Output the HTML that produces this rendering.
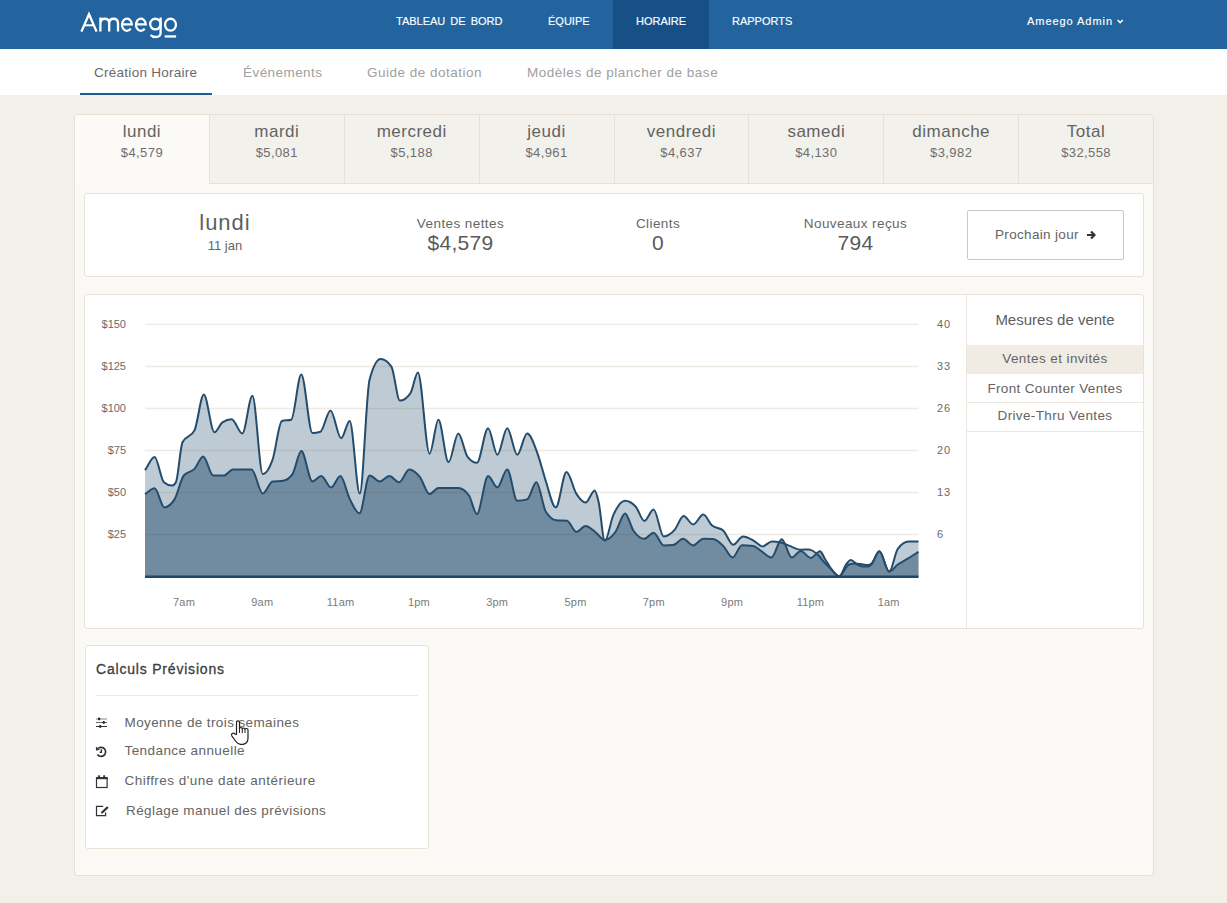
<!DOCTYPE html>
<html><head><meta charset="utf-8">
<style>
*{margin:0;padding:0;box-sizing:border-box}
html,body{width:1227px;height:903px;overflow:hidden;background:#f3f0e9;font-family:"Liberation Sans", sans-serif}
.a{position:absolute}
.t{position:absolute;white-space:nowrap;line-height:1}
</style></head><body>
<div class="a" style="left:0;top:0;width:1227px;height:49px;background:#23639e"></div><div class="a" style="left:613px;top:0;width:96px;height:49px;background:#175087"></div><svg class="a" style="left:0;top:0" width="200" height="49" viewBox="0 0 200 49"><g fill="none" stroke="#fff" stroke-width="2.3"><path d="M81.4,31.6 L89,14.2 L96.6,31.6" stroke-linejoin="miter" stroke-miterlimit="10"/><path d="M84.6,25.3 H93.4" stroke-width="2"/><path d="M100.4,31.6 V17.6 M100.4,23.5 C100.4,20.3 102.2,18.75 104.8,18.75 C107.4,18.75 109.2,20.3 109.2,23.5 V31.6 M109.2,23.5 C109.2,20.3 111,18.75 113.6,18.75 C116.2,18.75 118,20.3 118,23.5 V31.6"/><path d="M122,24.3 H131.8 A4.9,6.05 0 1 0 130.7,28.6"/><path d="M135.95,24.3 H145.75 A4.9,6.05 0 1 0 144.65,28.6"/><ellipse cx="155.35" cy="24.1" rx="5.2" ry="5.35"/><path d="M160.6,17.6 V33 C160.6,35.9 158.6,37.0 155.6,37.0 C153.2,37.0 151.6,36.2 150.6,34.8"/><ellipse cx="170.5" cy="24.7" rx="5.45" ry="5.95"/></g><rect x="164.7" y="35.3" width="11.4" height="2.3" fill="#fff"/></svg><div class="t" style="left:396.00px;top:15.69px;font-size:11px;color:#fff;letter-spacing:0px;word-spacing:2px;-webkit-text-stroke:0.15px #fff;">TABLEAU DE BORD</div><div class="t" style="left:548.00px;top:15.69px;font-size:11px;color:#fff;letter-spacing:0px;word-spacing:2px;-webkit-text-stroke:0.15px #fff;">ÉQUIPE</div><div class="t" style="left:636.00px;top:15.69px;font-size:11px;color:#fff;letter-spacing:0px;word-spacing:2px;-webkit-text-stroke:0.15px #fff;">HORAIRE</div><div class="t" style="left:732.00px;top:15.69px;font-size:11px;color:#fff;letter-spacing:0px;word-spacing:2px;-webkit-text-stroke:0.15px #fff;">RAPPORTS</div><div class="t" style="left:1027.00px;top:15.69px;font-size:11px;color:#fff;letter-spacing:0.95px;-webkit-text-stroke:0.15px #fff;">Ameego Admin</div><svg class="a" style="left:1116px;top:18px" width="9" height="7" viewBox="0 0 9 7"><path d="M1.6,2 L4.2,4.6 L6.8,2" fill="none" stroke="#fff" stroke-width="1.5"/></svg>
<div class="a" style="left:0;top:49px;width:1227px;height:46px;background:#fff"></div><div class="a" style="left:80px;top:93px;width:132px;height:2px;background:#1d5a96"></div><div class="t" style="left:94.00px;top:65.57px;font-size:13.5px;color:#6a6a6a;letter-spacing:0.27px;">Création Horaire</div><div class="t" style="left:243.00px;top:65.57px;font-size:13.5px;color:#a0a0a0;letter-spacing:0.44px;">Événements</div><div class="t" style="left:367.00px;top:65.57px;font-size:13.5px;color:#a0a0a0;letter-spacing:0.5px;">Guide de dotation</div><div class="t" style="left:527.00px;top:65.57px;font-size:13.5px;color:#a0a0a0;letter-spacing:0.52px;">Modèles de plancher de base</div>
<!-- main panel -->
<div class="a" style="left:74px;top:114px;width:1080px;height:762px;background:#faf9f6;border:1px solid #e6e0d5;border-radius:4px"></div>
<div class="a" style="left:75px;top:115px;width:134px;height:69px;background:#fbfaf7;border-top-left-radius:3px"></div><div class="t" style="left:41.94px;top:122.61px;font-size:17px;color:#636363;letter-spacing:0.5px;width:200px;text-align:center;">lundi</div><div class="t" style="left:41.94px;top:146.00px;font-size:13px;color:#6e6e6e;letter-spacing:0.4px;width:200px;text-align:center;">$4,579</div><div class="a" style="left:209px;top:115px;width:135px;height:69px;background:#f3f1eb;border-left:1px solid #e6e0d5;border-bottom:1px solid #e6e0d5;"></div><div class="t" style="left:176.81px;top:122.61px;font-size:17px;color:#636363;letter-spacing:0.5px;width:200px;text-align:center;">mardi</div><div class="t" style="left:176.81px;top:146.00px;font-size:13px;color:#6e6e6e;letter-spacing:0.4px;width:200px;text-align:center;">$5,081</div><div class="a" style="left:344px;top:115px;width:135px;height:69px;background:#f3f1eb;border-left:1px solid #e6e0d5;border-bottom:1px solid #e6e0d5;"></div><div class="t" style="left:311.69px;top:122.61px;font-size:17px;color:#636363;letter-spacing:0.5px;width:200px;text-align:center;">mercredi</div><div class="t" style="left:311.69px;top:146.00px;font-size:13px;color:#6e6e6e;letter-spacing:0.4px;width:200px;text-align:center;">$5,188</div><div class="a" style="left:479px;top:115px;width:135px;height:69px;background:#f3f1eb;border-left:1px solid #e6e0d5;border-bottom:1px solid #e6e0d5;"></div><div class="t" style="left:446.56px;top:122.61px;font-size:17px;color:#636363;letter-spacing:0.5px;width:200px;text-align:center;">jeudi</div><div class="t" style="left:446.56px;top:146.00px;font-size:13px;color:#6e6e6e;letter-spacing:0.4px;width:200px;text-align:center;">$4,961</div><div class="a" style="left:614px;top:115px;width:134px;height:69px;background:#f3f1eb;border-left:1px solid #e6e0d5;border-bottom:1px solid #e6e0d5;"></div><div class="t" style="left:581.44px;top:122.61px;font-size:17px;color:#636363;letter-spacing:0.5px;width:200px;text-align:center;">vendredi</div><div class="t" style="left:581.44px;top:146.00px;font-size:13px;color:#6e6e6e;letter-spacing:0.4px;width:200px;text-align:center;">$4,637</div><div class="a" style="left:748px;top:115px;width:135px;height:69px;background:#f3f1eb;border-left:1px solid #e6e0d5;border-bottom:1px solid #e6e0d5;"></div><div class="t" style="left:716.31px;top:122.61px;font-size:17px;color:#636363;letter-spacing:0.5px;width:200px;text-align:center;">samedi</div><div class="t" style="left:716.31px;top:146.00px;font-size:13px;color:#6e6e6e;letter-spacing:0.4px;width:200px;text-align:center;">$4,130</div><div class="a" style="left:883px;top:115px;width:135px;height:69px;background:#f3f1eb;border-left:1px solid #e6e0d5;border-bottom:1px solid #e6e0d5;"></div><div class="t" style="left:851.19px;top:122.61px;font-size:17px;color:#636363;letter-spacing:0.5px;width:200px;text-align:center;">dimanche</div><div class="t" style="left:851.19px;top:146.00px;font-size:13px;color:#6e6e6e;letter-spacing:0.4px;width:200px;text-align:center;">$3,982</div><div class="a" style="left:1018px;top:115px;width:135px;height:69px;background:#f3f1eb;border-left:1px solid #e6e0d5;border-bottom:1px solid #e6e0d5;border-top-right-radius:3px;"></div><div class="t" style="left:986.06px;top:122.61px;font-size:17px;color:#636363;letter-spacing:0.5px;width:200px;text-align:center;">Total</div><div class="t" style="left:986.06px;top:146.00px;font-size:13px;color:#6e6e6e;letter-spacing:0.4px;width:200px;text-align:center;">$32,558</div>
<!-- summary card -->
<div class="a" style="left:84px;top:193px;width:1060px;height:84px;background:#fff;border:1px solid #e8e2d7;border-radius:3px"></div>
<div class="t" style="left:125.00px;top:211.58px;font-size:22px;color:#606060;letter-spacing:1px;width:200px;text-align:center;">lundi</div><div class="t" style="left:125.00px;top:239.20px;font-size:13px;color:#666;width:200px;text-align:center;">11 jan</div><div class="t" style="left:360.50px;top:216.57px;font-size:13.5px;color:#666;letter-spacing:0.42px;width:200px;text-align:center;">Ventes nettes</div><div class="t" style="left:360.50px;top:232.22px;font-size:21px;color:#5a5a5a;letter-spacing:0.3px;width:200px;text-align:center;">$4,579</div><div class="t" style="left:558.00px;top:216.57px;font-size:13.5px;color:#666;letter-spacing:0.42px;width:200px;text-align:center;">Clients</div><div class="t" style="left:558.00px;top:232.22px;font-size:21px;color:#5a5a5a;letter-spacing:0.3px;width:200px;text-align:center;">0</div><div class="t" style="left:755.50px;top:216.57px;font-size:13.5px;color:#666;letter-spacing:0.42px;width:200px;text-align:center;">Nouveaux reçus</div><div class="t" style="left:755.50px;top:232.22px;font-size:21px;color:#5a5a5a;letter-spacing:0.3px;width:200px;text-align:center;">794</div><div class="a" style="left:967px;top:210px;width:157px;height:50px;border:1px solid #c8c8c8;border-radius:2px;background:#fff"></div><div class="t" style="left:995.00px;top:227.57px;font-size:13.5px;color:#646464;letter-spacing:0.33px;">Prochain jour</div><svg class="a" style="left:1086px;top:230px" width="11" height="10" viewBox="0 0 11 10"><path d="M1,5 H8 M5,1.5 L8.5,5 L5,8.5" fill="none" stroke="#333" stroke-width="2.2"/></svg>
<!-- chart card -->
<div class="a" style="left:84px;top:294px;width:1060px;height:335px;background:#fff;border:1px solid #e8e2d7;border-radius:3px"></div>
<div class="a" style="left:966px;top:295px;width:1px;height:333px;background:#ece7de"></div>
<svg class="a" style="left:0;top:0" width="1227" height="903"><line x1="145" x2="918.5" y1="534.57" y2="534.57" stroke="#efeae1" stroke-width="1.4"/><line x1="145" x2="918.5" y1="492.54" y2="492.54" stroke="#efeae1" stroke-width="1.4"/><line x1="145" x2="918.5" y1="450.51" y2="450.51" stroke="#efeae1" stroke-width="1.4"/><line x1="145" x2="918.5" y1="408.48" y2="408.48" stroke="#efeae1" stroke-width="1.4"/><line x1="145" x2="918.5" y1="366.45" y2="366.45" stroke="#efeae1" stroke-width="1.4"/><line x1="145" x2="918.5" y1="324.42" y2="324.42" stroke="#efeae1" stroke-width="1.4"/><path d="M145.0,470.2C148.2,465.8 151.4,456.9 154.6,456.9C157.7,456.9 160.8,479.6 163.9,482.2C166.6,484.5 169.2,485.6 171.9,485.6C173.2,485.6 174.6,484.5 175.9,482.2C178.1,478.5 180.3,446.7 182.5,442.3C186.5,434.4 190.5,438.3 194.5,430.4C197.6,424.3 200.7,394.5 203.8,394.5C207.3,394.5 210.9,432.2 214.4,432.2C217.1,432.2 219.7,424.2 222.4,422.4C225.5,420.3 228.6,419.2 231.7,419.2C235.2,419.2 238.8,433.5 242.3,433.5C245.7,433.5 249.0,395.8 252.4,395.8C255.9,395.8 259.3,474.2 262.8,474.2C266.1,474.2 269.3,468.9 272.6,459.6C275.7,450.7 278.8,421.9 281.9,421.0C285.0,420.1 288.1,420.6 291.2,419.7C294.6,418.8 297.9,374.5 301.3,374.5C305.0,374.5 308.7,433.0 312.4,433.0C315.1,433.0 317.7,432.6 320.4,431.7C323.8,430.6 327.1,410.4 330.5,410.4C334.0,410.4 337.6,438.3 341.1,438.3C344.0,438.3 346.8,421.0 349.7,421.0C353.1,421.0 356.4,493.6 359.8,493.6C363.0,493.6 366.3,392.1 369.5,380.0C373.2,366.1 377.0,359.1 380.7,359.1C384.3,359.1 387.8,361.6 391.4,366.6C394.2,370.6 397.1,400.6 399.9,400.6C403.4,400.6 407.0,398.1 410.5,393.1C413.0,389.6 415.4,372.4 417.9,372.4C421.8,372.4 425.7,453.7 429.6,453.7C432.5,453.7 435.5,419.7 438.4,419.7C441.8,419.7 445.1,462.2 448.5,462.2C451.8,462.2 455.0,433.5 458.3,433.5C461.4,433.5 464.5,453.0 467.6,456.9C470.7,460.8 473.8,462.8 476.9,462.8C480.6,462.8 484.4,428.2 488.1,428.2C491.2,428.2 494.3,454.8 497.4,454.8C500.7,454.8 503.9,428.2 507.2,428.2C510.6,428.2 513.9,454.8 517.3,454.8C520.6,454.8 523.8,433.5 527.1,433.5C530.7,433.5 534.2,444.5 537.8,454.3C540.4,461.6 543.1,472.8 545.7,480.8C549.1,491.0 552.4,507.4 555.8,507.4C559.4,507.4 562.9,472.1 566.5,472.1C569.8,472.1 573.0,488.5 576.3,493.6C579.4,498.5 582.5,502.6 585.6,502.6C588.6,502.6 591.7,490.4 594.7,490.4C596.0,490.4 597.3,496.5 598.6,502.0C600.7,510.8 602.7,540.8 604.8,540.8C607.6,540.8 610.5,521.6 613.3,515.2C617.2,506.4 621.1,500.8 625.0,500.8C628.6,500.8 632.2,502.8 635.8,506.7C638.6,509.8 641.5,520.9 644.3,520.9C647.4,520.9 650.5,509.5 653.6,509.5C657.0,509.5 660.3,536.4 663.7,536.4C667.3,536.4 671.0,534.0 674.6,529.9C677.6,526.6 680.6,516.0 683.6,516.0C686.8,516.0 690.0,524.5 693.2,524.5C696.6,524.5 699.9,514.5 703.3,514.5C706.2,514.5 709.2,523.1 712.1,525.6C715.8,528.8 719.5,527.2 723.2,530.4C726.5,533.3 729.9,544.8 733.2,544.8C736.4,544.8 739.7,536.5 742.9,536.5C746.3,536.5 749.7,538.5 753.1,540.3C756.2,541.9 759.4,546.4 762.5,546.4C765.6,546.4 768.8,541.4 771.9,541.4C774.9,541.4 777.8,541.8 780.8,542.5C783.7,543.2 786.7,544.8 789.6,545.9C793.3,547.3 797.0,549.7 800.7,549.7C803.4,549.7 806.1,549.4 808.8,549.4C810.2,549.4 811.6,550.2 813.0,551.0C814.7,552.0 816.3,553.4 818.0,555.0C820.0,556.9 822.0,559.8 824.0,562.0C826.0,564.2 828.0,566.1 830.0,568.0C833.2,571.0 836.4,576.3 839.6,576.3C841.7,576.3 843.9,567.3 846.0,564.5C847.6,562.3 849.3,559.9 850.9,559.9C852.8,559.9 854.8,563.0 856.7,564.1C858.7,565.2 860.6,566.5 862.6,566.5C864.6,566.5 866.5,566.5 868.5,566.5C869.5,566.5 870.4,565.4 871.4,564.5C874.1,562.0 876.7,551.3 879.4,551.3C882.7,551.3 885.9,571.6 889.2,571.6C892.1,571.6 894.9,552.8 897.8,548.9C901.4,544.0 905.0,541.6 908.6,541.6C911.9,541.6 915.2,541.6 918.5,541.6L918.5,577L145,577Z" fill="#244c6c" fill-opacity="0.29"/><path d="M145.0,494.1C148.2,492.2 151.4,488.3 154.6,488.3C157.9,488.3 161.1,507.4 164.4,507.4C167.8,507.4 171.1,504.7 174.5,499.4C177.6,494.5 180.7,479.3 183.8,475.5C187.4,471.1 190.9,472.7 194.5,468.9C197.4,465.8 200.3,456.4 203.2,456.4C206.5,456.4 209.8,475.5 213.1,475.5C216.6,475.5 220.2,475.5 223.7,475.5C226.8,475.5 229.9,469.4 233.0,469.4C236.5,469.4 240.1,469.4 243.6,469.4C246.3,469.4 248.9,469.4 251.6,469.4C255.3,469.4 259.1,493.6 262.8,493.6C266.1,493.6 269.3,482.1 272.6,481.6C276.1,481.1 279.7,481.3 283.2,480.8C286.3,480.3 289.4,478.6 292.5,474.2C295.4,470.0 298.4,451.1 301.3,451.1C305.0,451.1 308.7,481.4 312.4,481.4C315.3,481.4 318.3,476.1 321.2,476.1C324.5,476.1 327.8,487.5 331.1,487.5C334.2,487.5 337.3,476.1 340.4,476.1C343.5,476.1 346.6,492.8 349.7,498.9C353.0,505.3 356.2,513.3 359.5,513.3C362.9,513.3 366.2,475.5 369.6,475.5C373.0,475.5 376.5,481.6 379.9,481.6C383.0,481.6 386.1,476.1 389.2,476.1C392.6,476.1 395.9,482.2 399.3,482.2C402.6,482.2 405.9,469.4 409.2,469.4C412.7,469.4 416.3,472.5 419.8,476.9C423.1,481.0 426.3,494.1 429.6,494.1C432.5,494.1 435.5,488.0 438.4,488.0C445.0,488.0 451.7,488.0 458.3,488.0C461.9,488.0 465.4,490.5 469.0,495.5C471.6,499.2 474.3,514.1 476.9,514.1C480.6,514.1 484.4,476.1 488.1,476.1C491.2,476.1 494.3,487.5 497.4,487.5C500.7,487.5 503.9,469.4 507.2,469.4C510.6,469.4 513.9,500.8 517.3,500.8C520.6,500.8 523.8,500.3 527.1,499.4C530.2,498.5 533.3,482.2 536.4,482.2C539.5,482.2 542.6,506.3 545.7,511.4C549.3,517.3 552.8,519.9 556.4,520.2C559.9,520.5 563.5,520.4 567.0,520.7C570.1,521.0 573.2,531.9 576.3,531.9C579.4,531.9 582.5,526.0 585.6,526.0C588.9,526.0 592.2,529.8 595.5,532.2C598.6,534.5 601.7,540.0 604.8,540.0C608.4,540.0 612.1,536.6 615.7,531.5C618.8,527.2 621.9,513.6 625.0,513.6C627.8,513.6 630.7,526.6 633.5,530.7C637.1,535.9 640.7,538.8 644.3,538.8C647.4,538.8 650.5,532.7 653.6,532.7C657.0,532.7 660.3,545.4 663.7,545.4C666.8,545.4 669.9,545.3 673.0,545.1C676.4,544.9 679.7,538.8 683.1,538.8C686.5,538.8 689.8,545.4 693.2,545.4C696.6,545.4 699.9,538.7 703.3,538.7C706.6,538.7 709.9,538.8 713.2,538.9C716.5,539.0 719.9,542.6 723.2,545.9C726.3,549.0 729.5,557.5 732.6,557.5C735.7,557.5 738.9,545.3 742.0,545.3C745.7,545.3 749.4,545.5 753.1,545.9C756.1,546.2 759.0,549.8 762.0,551.7C765.1,553.7 768.3,557.5 771.4,557.5C774.8,557.5 778.3,539.2 781.7,539.2C785.1,539.2 788.4,557.5 791.8,557.5C794.8,557.5 797.7,550.9 800.7,550.9C804.1,550.9 807.4,557.9 810.8,557.9C813.9,557.9 816.9,551.3 820.0,551.3C821.7,551.3 823.3,556.4 825.0,559.0C826.7,561.6 828.3,564.7 830.0,567.0C833.0,571.2 836.1,576.3 839.1,576.3C842.4,576.3 845.6,565.5 848.9,564.5C850.9,563.9 852.8,563.6 854.8,563.6C856.7,563.6 858.7,563.9 860.6,564.1C863.2,564.4 865.9,565.0 868.5,565.0C869.5,565.0 870.4,564.3 871.4,563.6C874.1,561.6 876.7,551.3 879.4,551.3C882.7,551.3 885.9,571.6 889.2,571.6C892.1,571.6 894.9,566.6 897.8,564.5C901.1,562.2 904.3,560.7 907.6,558.7C911.2,556.5 914.9,554.1 918.5,551.8L918.5,577L145,577Z" fill="#244c6c" fill-opacity="0.5"/><path d="M145.0,470.2C148.2,465.8 151.4,456.9 154.6,456.9C157.7,456.9 160.8,479.6 163.9,482.2C166.6,484.5 169.2,485.6 171.9,485.6C173.2,485.6 174.6,484.5 175.9,482.2C178.1,478.5 180.3,446.7 182.5,442.3C186.5,434.4 190.5,438.3 194.5,430.4C197.6,424.3 200.7,394.5 203.8,394.5C207.3,394.5 210.9,432.2 214.4,432.2C217.1,432.2 219.7,424.2 222.4,422.4C225.5,420.3 228.6,419.2 231.7,419.2C235.2,419.2 238.8,433.5 242.3,433.5C245.7,433.5 249.0,395.8 252.4,395.8C255.9,395.8 259.3,474.2 262.8,474.2C266.1,474.2 269.3,468.9 272.6,459.6C275.7,450.7 278.8,421.9 281.9,421.0C285.0,420.1 288.1,420.6 291.2,419.7C294.6,418.8 297.9,374.5 301.3,374.5C305.0,374.5 308.7,433.0 312.4,433.0C315.1,433.0 317.7,432.6 320.4,431.7C323.8,430.6 327.1,410.4 330.5,410.4C334.0,410.4 337.6,438.3 341.1,438.3C344.0,438.3 346.8,421.0 349.7,421.0C353.1,421.0 356.4,493.6 359.8,493.6C363.0,493.6 366.3,392.1 369.5,380.0C373.2,366.1 377.0,359.1 380.7,359.1C384.3,359.1 387.8,361.6 391.4,366.6C394.2,370.6 397.1,400.6 399.9,400.6C403.4,400.6 407.0,398.1 410.5,393.1C413.0,389.6 415.4,372.4 417.9,372.4C421.8,372.4 425.7,453.7 429.6,453.7C432.5,453.7 435.5,419.7 438.4,419.7C441.8,419.7 445.1,462.2 448.5,462.2C451.8,462.2 455.0,433.5 458.3,433.5C461.4,433.5 464.5,453.0 467.6,456.9C470.7,460.8 473.8,462.8 476.9,462.8C480.6,462.8 484.4,428.2 488.1,428.2C491.2,428.2 494.3,454.8 497.4,454.8C500.7,454.8 503.9,428.2 507.2,428.2C510.6,428.2 513.9,454.8 517.3,454.8C520.6,454.8 523.8,433.5 527.1,433.5C530.7,433.5 534.2,444.5 537.8,454.3C540.4,461.6 543.1,472.8 545.7,480.8C549.1,491.0 552.4,507.4 555.8,507.4C559.4,507.4 562.9,472.1 566.5,472.1C569.8,472.1 573.0,488.5 576.3,493.6C579.4,498.5 582.5,502.6 585.6,502.6C588.6,502.6 591.7,490.4 594.7,490.4C596.0,490.4 597.3,496.5 598.6,502.0C600.7,510.8 602.7,540.8 604.8,540.8C607.6,540.8 610.5,521.6 613.3,515.2C617.2,506.4 621.1,500.8 625.0,500.8C628.6,500.8 632.2,502.8 635.8,506.7C638.6,509.8 641.5,520.9 644.3,520.9C647.4,520.9 650.5,509.5 653.6,509.5C657.0,509.5 660.3,536.4 663.7,536.4C667.3,536.4 671.0,534.0 674.6,529.9C677.6,526.6 680.6,516.0 683.6,516.0C686.8,516.0 690.0,524.5 693.2,524.5C696.6,524.5 699.9,514.5 703.3,514.5C706.2,514.5 709.2,523.1 712.1,525.6C715.8,528.8 719.5,527.2 723.2,530.4C726.5,533.3 729.9,544.8 733.2,544.8C736.4,544.8 739.7,536.5 742.9,536.5C746.3,536.5 749.7,538.5 753.1,540.3C756.2,541.9 759.4,546.4 762.5,546.4C765.6,546.4 768.8,541.4 771.9,541.4C774.9,541.4 777.8,541.8 780.8,542.5C783.7,543.2 786.7,544.8 789.6,545.9C793.3,547.3 797.0,549.7 800.7,549.7C803.4,549.7 806.1,549.4 808.8,549.4C810.2,549.4 811.6,550.2 813.0,551.0C814.7,552.0 816.3,553.4 818.0,555.0C820.0,556.9 822.0,559.8 824.0,562.0C826.0,564.2 828.0,566.1 830.0,568.0C833.2,571.0 836.4,576.3 839.6,576.3C841.7,576.3 843.9,567.3 846.0,564.5C847.6,562.3 849.3,559.9 850.9,559.9C852.8,559.9 854.8,563.0 856.7,564.1C858.7,565.2 860.6,566.5 862.6,566.5C864.6,566.5 866.5,566.5 868.5,566.5C869.5,566.5 870.4,565.4 871.4,564.5C874.1,562.0 876.7,551.3 879.4,551.3C882.7,551.3 885.9,571.6 889.2,571.6C892.1,571.6 894.9,552.8 897.8,548.9C901.4,544.0 905.0,541.6 908.6,541.6C911.9,541.6 915.2,541.6 918.5,541.6" fill="none" stroke="#244c6c" stroke-width="2"/><path d="M145.0,494.1C148.2,492.2 151.4,488.3 154.6,488.3C157.9,488.3 161.1,507.4 164.4,507.4C167.8,507.4 171.1,504.7 174.5,499.4C177.6,494.5 180.7,479.3 183.8,475.5C187.4,471.1 190.9,472.7 194.5,468.9C197.4,465.8 200.3,456.4 203.2,456.4C206.5,456.4 209.8,475.5 213.1,475.5C216.6,475.5 220.2,475.5 223.7,475.5C226.8,475.5 229.9,469.4 233.0,469.4C236.5,469.4 240.1,469.4 243.6,469.4C246.3,469.4 248.9,469.4 251.6,469.4C255.3,469.4 259.1,493.6 262.8,493.6C266.1,493.6 269.3,482.1 272.6,481.6C276.1,481.1 279.7,481.3 283.2,480.8C286.3,480.3 289.4,478.6 292.5,474.2C295.4,470.0 298.4,451.1 301.3,451.1C305.0,451.1 308.7,481.4 312.4,481.4C315.3,481.4 318.3,476.1 321.2,476.1C324.5,476.1 327.8,487.5 331.1,487.5C334.2,487.5 337.3,476.1 340.4,476.1C343.5,476.1 346.6,492.8 349.7,498.9C353.0,505.3 356.2,513.3 359.5,513.3C362.9,513.3 366.2,475.5 369.6,475.5C373.0,475.5 376.5,481.6 379.9,481.6C383.0,481.6 386.1,476.1 389.2,476.1C392.6,476.1 395.9,482.2 399.3,482.2C402.6,482.2 405.9,469.4 409.2,469.4C412.7,469.4 416.3,472.5 419.8,476.9C423.1,481.0 426.3,494.1 429.6,494.1C432.5,494.1 435.5,488.0 438.4,488.0C445.0,488.0 451.7,488.0 458.3,488.0C461.9,488.0 465.4,490.5 469.0,495.5C471.6,499.2 474.3,514.1 476.9,514.1C480.6,514.1 484.4,476.1 488.1,476.1C491.2,476.1 494.3,487.5 497.4,487.5C500.7,487.5 503.9,469.4 507.2,469.4C510.6,469.4 513.9,500.8 517.3,500.8C520.6,500.8 523.8,500.3 527.1,499.4C530.2,498.5 533.3,482.2 536.4,482.2C539.5,482.2 542.6,506.3 545.7,511.4C549.3,517.3 552.8,519.9 556.4,520.2C559.9,520.5 563.5,520.4 567.0,520.7C570.1,521.0 573.2,531.9 576.3,531.9C579.4,531.9 582.5,526.0 585.6,526.0C588.9,526.0 592.2,529.8 595.5,532.2C598.6,534.5 601.7,540.0 604.8,540.0C608.4,540.0 612.1,536.6 615.7,531.5C618.8,527.2 621.9,513.6 625.0,513.6C627.8,513.6 630.7,526.6 633.5,530.7C637.1,535.9 640.7,538.8 644.3,538.8C647.4,538.8 650.5,532.7 653.6,532.7C657.0,532.7 660.3,545.4 663.7,545.4C666.8,545.4 669.9,545.3 673.0,545.1C676.4,544.9 679.7,538.8 683.1,538.8C686.5,538.8 689.8,545.4 693.2,545.4C696.6,545.4 699.9,538.7 703.3,538.7C706.6,538.7 709.9,538.8 713.2,538.9C716.5,539.0 719.9,542.6 723.2,545.9C726.3,549.0 729.5,557.5 732.6,557.5C735.7,557.5 738.9,545.3 742.0,545.3C745.7,545.3 749.4,545.5 753.1,545.9C756.1,546.2 759.0,549.8 762.0,551.7C765.1,553.7 768.3,557.5 771.4,557.5C774.8,557.5 778.3,539.2 781.7,539.2C785.1,539.2 788.4,557.5 791.8,557.5C794.8,557.5 797.7,550.9 800.7,550.9C804.1,550.9 807.4,557.9 810.8,557.9C813.9,557.9 816.9,551.3 820.0,551.3C821.7,551.3 823.3,556.4 825.0,559.0C826.7,561.6 828.3,564.7 830.0,567.0C833.0,571.2 836.1,576.3 839.1,576.3C842.4,576.3 845.6,565.5 848.9,564.5C850.9,563.9 852.8,563.6 854.8,563.6C856.7,563.6 858.7,563.9 860.6,564.1C863.2,564.4 865.9,565.0 868.5,565.0C869.5,565.0 870.4,564.3 871.4,563.6C874.1,561.6 876.7,551.3 879.4,551.3C882.7,551.3 885.9,571.6 889.2,571.6C892.1,571.6 894.9,566.6 897.8,564.5C901.1,562.2 904.3,560.7 907.6,558.7C911.2,556.5 914.9,554.1 918.5,551.8" fill="none" stroke="#244c6c" stroke-width="2"/><rect x="145" y="575.5" width="773.5" height="2.5" fill="#1f4868"/></svg><div class="t" style="left:26.00px;top:529.39px;font-size:11px;color:#6a6a6a;width:100px;text-align:right;">$25</div><div class="t" style="left:937.00px;top:529.39px;font-size:11px;color:#6a6a6a;letter-spacing:0.8px;">6</div><div class="t" style="left:26.00px;top:487.29px;font-size:11px;color:#6a6a6a;width:100px;text-align:right;">$50</div><div class="t" style="left:937.00px;top:487.29px;font-size:11px;color:#6a6a6a;letter-spacing:0.8px;">13</div><div class="t" style="left:26.00px;top:445.19px;font-size:11px;color:#6a6a6a;width:100px;text-align:right;">$75</div><div class="t" style="left:937.00px;top:445.19px;font-size:11px;color:#6a6a6a;letter-spacing:0.8px;">20</div><div class="t" style="left:26.00px;top:403.09px;font-size:11px;color:#6a6a6a;width:100px;text-align:right;">$100</div><div class="t" style="left:937.00px;top:403.09px;font-size:11px;color:#6a6a6a;letter-spacing:0.8px;">26</div><div class="t" style="left:26.00px;top:360.99px;font-size:11px;color:#6a6a6a;width:100px;text-align:right;">$125</div><div class="t" style="left:937.00px;top:360.99px;font-size:11px;color:#6a6a6a;letter-spacing:0.8px;">33</div><div class="t" style="left:26.00px;top:318.89px;font-size:11px;color:#6a6a6a;width:100px;text-align:right;">$150</div><div class="t" style="left:937.00px;top:318.89px;font-size:11px;color:#6a6a6a;letter-spacing:0.8px;">40</div><div class="t" style="left:154.00px;top:596.69px;font-size:11px;color:#7a7a7a;letter-spacing:0.2px;width:60px;text-align:center;">7am</div><div class="t" style="left:232.30px;top:596.69px;font-size:11px;color:#7a7a7a;letter-spacing:0.2px;width:60px;text-align:center;">9am</div><div class="t" style="left:310.60px;top:596.69px;font-size:11px;color:#7a7a7a;letter-spacing:0.2px;width:60px;text-align:center;">11am</div><div class="t" style="left:388.90px;top:596.69px;font-size:11px;color:#7a7a7a;letter-spacing:0.2px;width:60px;text-align:center;">1pm</div><div class="t" style="left:467.20px;top:596.69px;font-size:11px;color:#7a7a7a;letter-spacing:0.2px;width:60px;text-align:center;">3pm</div><div class="t" style="left:545.50px;top:596.69px;font-size:11px;color:#7a7a7a;letter-spacing:0.2px;width:60px;text-align:center;">5pm</div><div class="t" style="left:623.80px;top:596.69px;font-size:11px;color:#7a7a7a;letter-spacing:0.2px;width:60px;text-align:center;">7pm</div><div class="t" style="left:702.10px;top:596.69px;font-size:11px;color:#7a7a7a;letter-spacing:0.2px;width:60px;text-align:center;">9pm</div><div class="t" style="left:780.40px;top:596.69px;font-size:11px;color:#7a7a7a;letter-spacing:0.2px;width:60px;text-align:center;">11pm</div><div class="t" style="left:858.70px;top:596.69px;font-size:11px;color:#7a7a7a;letter-spacing:0.2px;width:60px;text-align:center;">1am</div>
<div class="t" style="left:967.00px;top:312.30px;font-size:15px;color:#5e5e5e;width:176px;text-align:center;">Mesures de vente</div><div class="a" style="left:967px;top:345px;width:176px;height:29px;background:#f0ece3"></div><div class="t" style="left:967.00px;top:352.17px;font-size:13.5px;color:#646464;letter-spacing:0.42px;width:176px;text-align:center;">Ventes et invités</div><div class="t" style="left:967.00px;top:381.57px;font-size:13.5px;color:#646464;letter-spacing:0.34px;width:176px;text-align:center;">Front Counter Ventes</div><div class="a" style="left:967px;top:402px;width:176px;height:1px;background:#ece7de"></div><div class="t" style="left:967.00px;top:409.27px;font-size:13.5px;color:#646464;letter-spacing:0.36px;width:176px;text-align:center;">Drive-Thru Ventes</div><div class="a" style="left:967px;top:431px;width:176px;height:1px;background:#ece7de"></div>
<!-- calcs card -->
<div class="a" style="left:85px;top:645px;width:344px;height:204px;background:#fff;border:1px solid #e8e2d7;border-radius:3px"></div>
<div class="t" style="left:96.00px;top:662.15px;font-size:14px;color:#3d3d3d;letter-spacing:0.8px;-webkit-text-stroke:0.3px #3d3d3d;">Calculs Prévisions</div><div class="a" style="left:96px;top:695px;width:322px;height:1px;background:#ebe9e4"></div><div class="t" style="left:124.50px;top:715.67px;font-size:13.5px;color:#646464;letter-spacing:0.39px;">Moyenne de trois semaines</div><div class="t" style="left:124.50px;top:744.37px;font-size:13.5px;color:#646464;letter-spacing:0.42px;">Tendance annuelle</div><div class="t" style="left:124.50px;top:774.07px;font-size:13.5px;color:#646464;letter-spacing:0.47px;">Chiffres d'une date antérieure</div><div class="t" style="left:126.00px;top:804.47px;font-size:13.5px;color:#646464;letter-spacing:0.41px;">Réglage manuel des prévisions</div><svg class="a" style="left:95px;top:716px" width="14" height="14" viewBox="0 0 14 14"><g stroke-width="1"><line x1="1" x2="12" y1="3" y2="3" stroke="#888"/><line x1="1" x2="12" y1="6.5" y2="6.5" stroke="#666"/><line x1="1" x2="12" y1="10.5" y2="10.5" stroke="#333"/></g><g fill="#222"><ellipse cx="4.1" cy="3" rx="1.2" ry="1.4"/><ellipse cx="8.8" cy="6.5" rx="1.2" ry="1.4"/><ellipse cx="5.2" cy="10.5" rx="1.2" ry="1.4"/></g></svg><svg class="a" style="left:95px;top:745px" width="14" height="14" viewBox="0 0 14 14"><path d="M3.2,3.4 A4.5,4.5 0 1 1 2.4,9.4" fill="none" stroke="#333" stroke-width="1.7"/><path d="M0.9,1.4 L4.9,5.1 L1,5.5Z" fill="#333"/><path d="M6.4,4.3 V7.2 H4.7" fill="none" stroke="#333" stroke-width="1.4"/></svg><svg class="a" style="left:95px;top:774px" width="14" height="15" viewBox="0 0 14 15"><rect x="1.5" y="3.7" width="10.6" height="9.8" fill="none" stroke="#333" stroke-width="1.2"/><rect x="1" y="3.2" width="11.6" height="2" fill="#333"/><rect x="3.1" y="1.3" width="1.9" height="2.6" fill="#333"/><rect x="8.2" y="1.3" width="1.9" height="2.6" fill="#333"/></svg><svg class="a" style="left:95px;top:805px" width="15" height="13" viewBox="0 0 15 13"><path d="M8.2,1.3 H1.5 V10.6 H10.6 V7.4" fill="none" stroke="#333" stroke-width="1.2"/><path d="M5.8,8.6 L6.3,6.7 L12.1,1.2 L13.7,2.8 L7.9,8.2Z" fill="#333"/></svg><svg class="a" style="left:229px;top:718.5px" width="22" height="27" viewBox="0 0 22 27"><path d="M7.5,15.5 V3.5 Q7.5,1.8 9,1.8 Q10.5,1.8 10.5,3.5 V10 Q10.5,8.5 12,8.5 Q13.3,8.5 13.3,10 Q13.3,9 14.7,9 Q16,9 16,10.5 Q16.2,9.5 17.5,9.5 Q19,9.5 19,11 V19 Q19,24.5 14,25.3 H11.5 Q8.5,25 6.5,22 L2.8,16.8 Q2,15.3 3.2,14.5 Q4.6,13.7 6,15 Z" fill="#fff" stroke="#222" stroke-width="1.2" stroke-linejoin="round"/><path d="M10.5,10 V14 M13.3,10 V14 M16,10.5 V14" stroke="#222" stroke-width="1"/></svg>
</body></html>
